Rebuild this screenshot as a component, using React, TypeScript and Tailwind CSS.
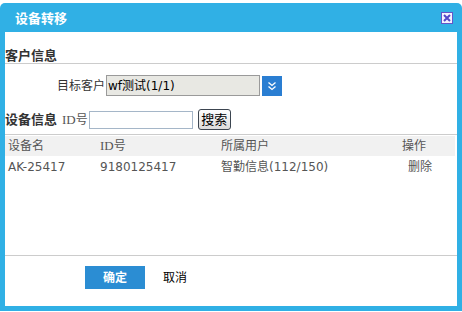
import React from 'react';

const font = "font-['DejaVu_Sans','Noto_Sans_CJK_SC',sans-serif]";

const rows = [
  { name: 'AK-25417', id: '9180125417', owner: '智勤信息(112/150)' },
];

export default function App() {
  return (
    <div className={`w-[462px] h-[312px] bg-white pt-[3px] ${font}`}>
      <div className="w-[462px] h-[308px] bg-[#30b0e5] rounded-t-[5px] px-[5px] pb-[5px] flex flex-col">
        {/* title bar */}
        <div className="h-[29px] flex items-center justify-between pl-[10px] pr-[4px]">
          <span className="text-white font-bold text-[13px] leading-none pt-[2px]">设备转移</span>
          <svg width="12" height="12" viewBox="0 0 12 12" className="mt-[1px]">
            <rect x="0.5" y="0.5" width="11" height="11" fill="#f4f2ff" stroke="#6456c8" />
            <path d="M3 3 L9 9 M9 3 L3 9" stroke="#5447c8" strokeWidth="2" />
          </svg>
        </div>

        <div className="flex-1 bg-white flex flex-col">
          {/* customer info */}
          <div className="h-[32px] border-b border-[#cccccc] pt-[11px]">
            <span className="text-[13px] leading-[17px] font-bold text-[#333333]">客户信息</span>
          </div>

          <div className="mt-[11px] h-[21px] flex items-center pl-[52px]">
            <span className="text-[12px] text-[#333333] mr-[1px]">目标客户</span>
            <div className="w-[154px] h-[21px] bg-[#e8e8e3] border border-[#9a9a9a] flex items-center pl-[1px] text-[12px] font-normal text-black">
              wf测试(1/1)
            </div>
            <div className="ml-[2px] w-[20px] h-[20px] bg-[#2a7ed2] flex items-center justify-center">
              <svg width="10" height="10" viewBox="0 0 10 10">
                <path d="M1.5 1.5 L5 4.5 L8.5 1.5 M1.5 5.5 L5 8.5 L8.5 5.5" fill="none" stroke="white" strokeWidth="1.3" />
              </svg>
            </div>
          </div>

          {/* device info */}
          <div className="mt-[13px] h-[21px] flex items-center">
            <span className="text-[13px] font-bold text-[#333333]">设备信息</span>
            <span className="ml-[5px] text-[12px] text-[#555555]">
              <span className="font-['Liberation_Serif',serif] text-[13px]">ID</span>号
            </span>
            <div className="ml-[1px] w-[104px] h-[18px] border border-[#a5b6c8] bg-white" />
            <button className="ml-[5px] w-[33px] h-[21px] rounded-[3px] border border-[#3c4550] bg-gradient-to-b from-white to-[#dcdcdc] text-[13px] text-black leading-none">
              搜索
            </button>
          </div>

          <div className="mt-[4px] border-b border-[#cccccc]" />

          {/* table */}
          <div className="mt-[1px] mr-[2px] h-[20px] bg-[#f1f1f1] grid grid-cols-[92px_121px_181px_1fr] items-center pl-[3px] text-[12px] text-[#555555]">
            <span>设备名</span>
            <span>
              <span className="font-['Liberation_Serif',serif] text-[13px]">ID</span>号
            </span>
            <span>所属用户</span>
            <span>操作</span>
          </div>
          {rows.map((r) => (
            <div key={r.id} className="h-[21px] grid grid-cols-[92px_121px_181px_1fr] items-center pl-[3px] text-[12px] text-[#555555]">
              <span>{r.name}</span>
              <span>{r.id}</span>
              <span>{r.owner}</span>
              <span className="pl-[6px]">删除</span>
            </div>
          ))}

          <div className="flex-1" />

          {/* footer */}
          <div className="h-[51px] border-t border-[#cccccc] flex items-start pt-[10px] pl-[80px]">
            <button className="w-[60px] h-[23px] bg-[#2b8dd3] text-white text-[12px] font-bold">确定</button>
            <span className="ml-[18px] h-[23px] flex items-center text-[12px] text-black">取消</span>
          </div>
        </div>
      </div>
    </div>
  );
}
